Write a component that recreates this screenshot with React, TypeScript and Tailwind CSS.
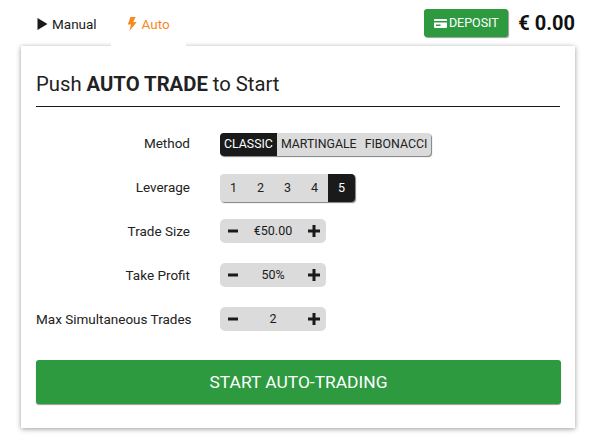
import React from 'react';

const FONT = "font-['Roboto',sans-serif]";

const Play = () => (
  <svg width="11" height="12" viewBox="0 0 11 12" className="mr-[4px]">
    <path d="M0.5 0 L10.5 6 L0.5 12 Z" fill="#1a1a1a" />
  </svg>
);

const Bolt = () => (
  <svg width="10" height="14" viewBox="0 0 10 14" className="mr-[5px]">
    <path d="M3.4 0 H8.6 L6.2 5 H9.8 L2.4 14 L4 7.4 H0.8 Z" fill="#f7891e" />
  </svg>
);

const Card = () => (
  <svg width="13" height="9" viewBox="0 0 13 9" className="mr-[2px]">
    <path fillRule="evenodd" d="M1 0 H12 a1 1 0 0 1 1 1 V8 a1 1 0 0 1 -1 1 H1 a1 1 0 0 1 -1 -1 V1 a1 1 0 0 1 1 -1 Z M0 2 V3.5 H13 V2 Z M2 5.5 V7 H6.5 V5.5 Z" fill="#fff" />
  </svg>
);

const Row = ({ label, children, className, labelClass = '' }: { label: string; children: React.ReactNode; className: string; labelClass?: string }) => (
  <div className={`flex items-center gap-[30px] ${className}`}>
    <div className={`w-[154px] whitespace-nowrap text-right text-[13.5px] leading-[16px] text-[#222] ${labelClass}`}>{label}</div>
    {children}
  </div>
);

const Stepper = ({ value }: { value: string }) => (
  <div className="flex h-[24px] w-[106px] items-center justify-between rounded-[5px] bg-[#dbdbdb] pl-[8px] pr-[6px] text-[#1a1a1a]">
    <svg width="10" height="10" viewBox="0 0 10 10"><rect x="0" y="3.5" width="10" height="3" fill="#1a1a1a" /></svg>
    <span className="text-[12.5px] leading-[16px]">{value}</span>
    <svg width="12" height="12" viewBox="0 0 12 12"><path d="M4.5 0 H7.5 V4.5 H12 V7.5 H7.5 V12 H4.5 V7.5 H0 V4.5 H4.5 Z" fill="#1a1a1a" /></svg>
  </div>
);

export default function App() {
  const methods = ['CLASSIC', 'MARTINGALE', 'FIBONACCI'];
  const levers = ['1', '2', '3', '4', '5'];

  return (
    <div className={`h-[435px] w-[597px] overflow-hidden bg-white ${FONT}`}>
      <div className="flex h-[46px] items-center pl-[37px] pr-[22px]">
        <div className="flex items-center pt-[2px] text-[13.5px] text-[#1a1a1a]">
          <Play />Manual
        </div>
        <div className="relative z-10 ml-[14px] flex h-[50px] w-[75px] items-center justify-center self-start bg-white pb-[2px] text-[13.5px] text-[#f7891e]">
          <Bolt />Auto
        </div>
        <div className="ml-auto flex items-center">
          <div className="flex h-[28px] w-[84px] items-center justify-center rounded-[3px] bg-[#2e9a3f] text-[12.5px] text-white shadow-[1px_1px_1px_rgba(0,0,0,0.4)]">
            <Card />DEPOSIT
          </div>
          <div className="ml-[10px] text-[20px] font-bold leading-none text-[#111]">€ 0.00</div>
        </div>
      </div>

      <div className="mx-[21px] h-[382px] w-[554px] bg-white px-[15px] pt-[24px] shadow-[0_1px_5px_rgba(0,0,0,0.4)]">
        <h1 className="border-b border-[#1a1a1a] pb-[8px] text-[20.25px] font-normal leading-[28px] text-[#222]">
          Push <b className="font-bold">AUTO TRADE</b> to Start
        </h1>

        <Row label="Method" labelClass="mb-[4px]" className="mt-[26px]">
          <div className="flex h-[23px] overflow-hidden rounded-[4px] bg-[#dbdbdb] text-[12.35px] text-[#222] shadow-[1px_1px_1px_rgba(0,0,0,0.5)]">
            {methods.map((m, i) => (
              <div key={m} className={`flex items-center px-[4px] ${i === 0 ? 'bg-[#1a1a1a] text-white' : ''}`}>{m}</div>
            ))}
          </div>
        </Row>

        <Row label="Leverage" labelClass="mb-[2px]" className="mt-[18px]">
          <div className="flex h-[28px] overflow-hidden rounded-[4px] bg-[#dbdbdb] text-[12.5px] text-[#222] shadow-[1px_1px_1px_rgba(0,0,0,0.5)]">
            {levers.map((l) => (
              <div key={l} className={`flex w-[27px] items-center justify-center ${l === '5' ? 'bg-[#1a1a1a] text-white' : ''}`}>{l}</div>
            ))}
          </div>
        </Row>

        <Row label="Trade Size" className="mt-[17px]"><Stepper value="€50.00" /></Row>
        <Row label="Take Profit" className="mt-[20px]"><Stepper value="50%" /></Row>
        <Row label="Max Simultaneous Trades" className="mt-[20px]"><Stepper value="2" /></Row>

        <div className="mr-[-1px] mt-[29px] flex h-[44px] items-center justify-center rounded-[3px] bg-[#2e9a3f] text-[17.4px] text-white shadow-[0_1px_1px_rgba(0,0,0,0.4)]">
          START AUTO-TRADING
        </div>
      </div>
    </div>
  );
}
